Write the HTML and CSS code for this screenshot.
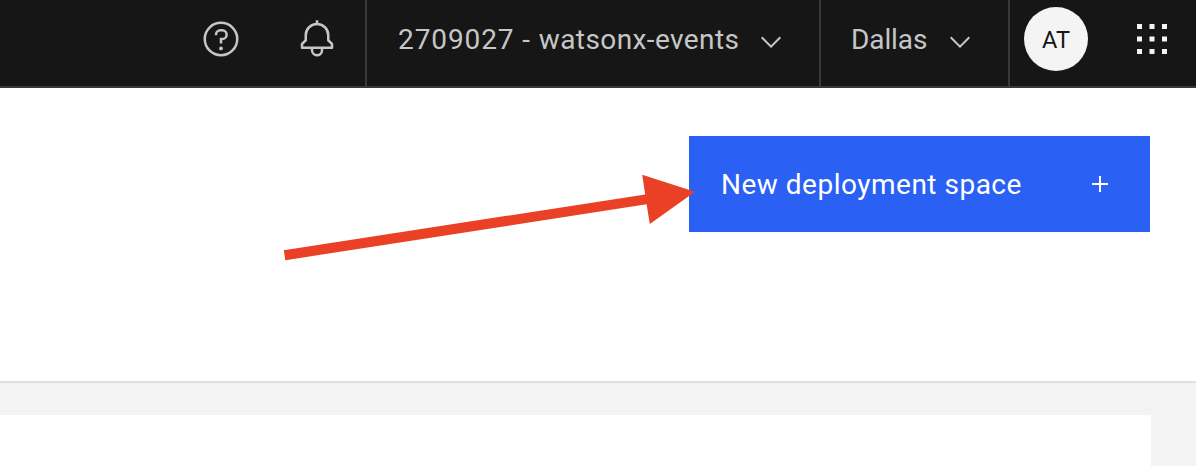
FILE: index.html
```html
<!DOCTYPE html>
<html lang="en">
<head>
<meta charset="utf-8">
<title>Deployments</title>
<link rel="stylesheet" href="styles.css">
</head>
<body>
<header class="topbar">
  <div class="tools">
    <svg class="icon" viewBox="0 0 32 32"><path d="M16 2a14 14 0 1 0 14 14A14 14 0 0 0 16 2Zm0 26a12 12 0 1 1 12-12A12 12 0 0 1 16 28Z"/><circle cx="16" cy="23.5" r="1.5"/><path d="M17 8h-1.500A4.490 4.490 0 0 0 11 12.500V13h2v-.5A2.500 2.500 0 0 1 15.500 10H17a2.500 2.500 0 0 1 0 5h-2v4.500h2V17a4.500 4.500 0 0 0 0-9Z"/></svg>
    <svg class="icon" viewBox="0 0 32 32"><path d="M28.707 19.293 26 16.586V13a10.014 10.014 0 0 0-9-9.950V1h-2v2.050A10.014 10.014 0 0 0 6 13v3.586l-2.707 2.707A1 1 0 0 0 3 20v3a1 1 0 0 0 1 1h7v.777a5.152 5.152 0 0 0 4.500 5.199A5.006 5.006 0 0 0 21 25v-1h7a1 1 0 0 0 1-1v-3a1 1 0 0 0-.293-.707ZM19 25a3 3 0 0 1-6 0v-1h6Zm8-3H5v-1.586l2.707-2.707A1 1 0 0 0 8 17v-4a8 8 0 0 1 16 0v4a1 1 0 0 0 .293.707L27 20.414Z"/></svg>
  </div>
  <div class="picker account">
    <span class="account-id">2709027 - <span class="account-name">watsonx-events</span></span>
    <svg class="chevron" viewBox="0 0 16 16"><path d="M8 11 3 6l.7-.7L8 9.600l4.300-4.300.7.7z"/></svg>
  </div>
  <div class="picker region">
    <span class="region-name">Dallas</span>
    <svg class="chevron" viewBox="0 0 16 16"><path d="M8 11 3 6l.7-.7L8 9.600l4.300-4.300.7.7z"/></svg>
  </div>
  <div class="profile">
    <span class="avatar">AT</span>
    <svg class="switcher" viewBox="0 0 32 32"><path d="M4 4h4v4H4zM14 4h4v4h-4zM24 4h4v4h-4zM4 14h4v4H4zM14 14h4v4h-4zM24 14h4v4h-4zM4 24h4v4H4zM14 24h4v4h-4zM24 24h4v4h-4z"/></svg>
  </div>
</header>
<main>
  <section class="heading">
    <button class="primary"><span class="primary-label">New deployment space</span>
      <svg class="plus" viewBox="0 0 16 16"><path d="M7 0h2v7h7v2H9v7H7V9H0V7h7z"/></svg>
    </button>
  </section>
  <section class="content"><div class="card"></div></section>
</main>
<svg class="pointer" viewBox="0 0 420 96"><path d="M3.800 90.300 365.200 34.500 362.200 14.800 415 31.800 369.800 64 366.600 44.300 5.300 100.200z"/></svg>
</body>
</html>
```
FILE: styles.css
```css
* { box-sizing: border-box; }
body {
  margin: 0;
  height: 466px;
  overflow: hidden;
  display: flex;
  flex-direction: column;
  background: #fff;
  font-family: Roboto, "Liberation Sans", sans-serif;
}
svg { display: block; flex: none; }
.topbar {
  display: flex;
  height: 88px;
  flex: none;
  background: #161616;
  border-bottom: 2px solid #393939;
  color: #c6c6c6;
}
.topbar svg { fill: #c6c6c6; }
.tools {
  display: flex;
  width: 365px;
  justify-content: flex-end;
  align-items: center;
  gap: 56px;
  padding: 0 28px 8px 0;
}
.icon { width: 40px; height: 40px; }
.picker {
  display: flex;
  align-items: center;
  justify-content: space-between;
  border-left: 2px solid #393939;
  font-size: 28px;
  line-height: 36px;
  white-space: nowrap;
}
.account { width: 454px; padding: 0 32px 8px 31px; }
.region { width: 189px; padding: 0 32px 8px 30px; }
.account-id, .region-name { padding-top: 2px; }
.account-id { letter-spacing: 0.9px; }
.account-name { letter-spacing: 0.4px; }
.region-name { letter-spacing: -0.1px; }
.chevron { width: 32px; height: 32px; margin-top: 6px; }
.profile {
  display: flex;
  flex: 1;
  align-items: center;
  gap: 44px;
  padding: 0 0 8px 14px;
  border-left: 2px solid #393939;
}
.avatar {
  display: flex;
  align-items: center;
  justify-content: center;
  width: 64px;
  height: 64px;
  padding-top: 2px;
  border-radius: 50%;
  background: #f4f4f4;
  color: #161616;
  font-size: 23.500px;
}
.switcher { width: 40px; height: 40px; }
.topbar .switcher { fill: #f4f4f4; }
main { flex: 1; display: flex; flex-direction: column; }
.heading {
  display: flex;
  justify-content: flex-end;
  align-items: flex-start;
  height: 295px;
  flex: none;
  padding: 48px 46px 0 0;
  border-bottom: 2px solid #e0e0e0;
}
.primary {
  display: flex;
  align-items: center;
  justify-content: space-between;
  width: 461px;
  height: 96px;
  padding: 0 42px 0 32px;
  border: 0;
  background: #2b60f5;
  color: #fff;
  font: 28px/36px Roboto, "Liberation Sans", sans-serif;
}
.primary-label { padding-top: 2px; letter-spacing: 0.5px; white-space: nowrap; }
.plus { width: 16px; height: 16px; fill: #fff; }
.content { flex: 1; display: flex; padding: 32px 45px 0 0; background: #f3f3f3; }
.card { flex: 1; background: #fff; border-radius: 0 1px 0 0; }
/* Callout arrow drawn over the page */
.pointer {
  position: absolute;
  left: 280px;
  top: 160px;
  width: 420px;
  height: 96px;
  overflow: visible;
  fill: #ea4025;
}
```
